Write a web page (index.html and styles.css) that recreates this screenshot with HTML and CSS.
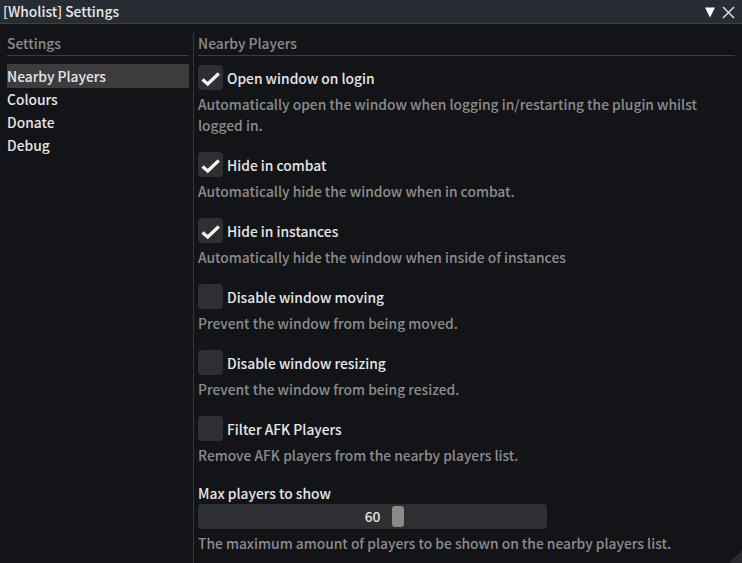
FILE: index.html
```html
<!DOCTYPE html>
<html>
<head>
<meta charset="utf-8">
<link rel="stylesheet" href="styles.css">
</head>
<body>
<div class="window">
  <div class="titlebar">
    <span class="title">[Wholist] Settings</span>
    <div class="title-buttons">
      <svg class="tri" width="11" height="11" viewBox="0 0 11 11"><polygon points="0,0.5 10,0.5 5,10.5" fill="#ffffff"/></svg>
      <svg class="close" width="13" height="13" viewBox="0 0 13 13"><path d="M1 1 L12 12 M12 1 L1 12" stroke="#e8e8e8" stroke-width="1.4" fill="none"/></svg>
    </div>
  </div>
  <div class="content">
    <div class="sidebar">
      <div class="header">Settings</div>
      <div class="sep"></div>
      <div class="nav">
        <div class="nav-item active">Nearby Players</div>
        <div class="nav-item">Colours</div>
        <div class="nav-item">Donate</div>
        <div class="nav-item">Debug</div>
      </div>
    </div>
    <div class="divider"></div>
    <div class="main">
      <div class="header">Nearby Players</div>
      <div class="sep"></div>
      <div class="options">
        <div class="option">
          <div class="check-row"><span class="box checked"><svg width="25" height="25" viewBox="0 0 25 25"><polyline points="4.5,14.5 9.7,19 20.8,8.5" fill="none" stroke="#f2f2f2" stroke-width="3.2"/></svg></span><span class="label">Open window on login</span></div>
          <div class="desc">Automatically open the window when logging in/restarting the plugin whilst logged in.</div>
        </div>
        <div class="option">
          <div class="check-row"><span class="box checked"><svg width="25" height="25" viewBox="0 0 25 25"><polyline points="4.5,14.5 9.7,19 20.8,8.5" fill="none" stroke="#f2f2f2" stroke-width="3.2"/></svg></span><span class="label">Hide in combat</span></div>
          <div class="desc">Automatically hide the window when in combat.</div>
        </div>
        <div class="option">
          <div class="check-row"><span class="box checked"><svg width="25" height="25" viewBox="0 0 25 25"><polyline points="4.5,14.5 9.7,19 20.8,8.5" fill="none" stroke="#f2f2f2" stroke-width="3.2"/></svg></span><span class="label">Hide in instances</span></div>
          <div class="desc">Automatically hide the window when inside of instances</div>
        </div>
        <div class="option">
          <div class="check-row"><span class="box"></span><span class="label">Disable window moving</span></div>
          <div class="desc">Prevent the window from being moved.</div>
        </div>
        <div class="option">
          <div class="check-row"><span class="box"></span><span class="label">Disable window resizing</span></div>
          <div class="desc">Prevent the window from being resized.</div>
        </div>
        <div class="option">
          <div class="check-row"><span class="box"></span><span class="label">Filter AFK Players</span></div>
          <div class="desc">Remove AFK players from the nearby players list.</div>
        </div>
        <div class="option slider-option">
          <div class="label plain">Max players to show</div>
          <div class="slider">
            <span class="slider-value">60</span>
            <span class="grab" style="left: 194px"></span>
          </div>
          <div class="desc">The maximum amount of players to be shown on the nearby players list.</div>
        </div>
      </div>
    </div>
  </div>
  <svg class="grip" width="13" height="13" viewBox="0 0 13 13"><polygon points="13,0 13,13 0,13" fill="#26282e"/></svg>
</div>
</body>
</html>
```

FILE: styles.css
```css
* { box-sizing: border-box; }
html, body { margin: 0; padding: 0; background: #131418; }
body {
  font-family: "Noto Sans CJK JP", "Noto Sans", sans-serif;
  font-weight: 500;
  font-size: 13.8px;
  color: #e6e6e6;
}
.window {
  position: relative;
  width: 742px;
  height: 563px;
  background: #131418;
  overflow: hidden;
}
.titlebar {
  height: 24px;
  background: #282c34;
  border-bottom: 1px solid #3b3f47;
  display: flex;
  align-items: center;
  justify-content: space-between;
  padding: 0 7px 0 3px;
}
.title {
  font-size: 13.8px;
  color: #e8e8e8;
  line-height: 23px;
}
.title-buttons {
  display: flex;
  align-items: center;
  gap: 6px;
  padding-top: 1px;
}
.content {
  display: flex;
  padding: 9px 7px 0 7px;
  height: 539px;
}
.sidebar {
  width: 182px;
  flex: none;
  padding-top: 0;
}
.divider {
  width: 1px;
  background: #33353b;
  margin: -1px 4px 0 4px;
  flex: none;
}
.main {
  flex: 1;
  padding-top: 0;
}
.header {
  color: #8c8c8c;
  line-height: 21px;
  height: 22px;
}
.sep {
  height: 1px;
  background: #3a3c42;
}
.nav {
  padding-top: 8px;
  display: flex;
  flex-direction: column;
}
.nav-item {
  height: 23px;
  line-height: 23px;
  color: #e6e6e6;
}
.nav-item.active {
  background: #3c3c3f;
  height: 24px;
  line-height: 25px;
}
.options {
  padding-top: 9px;
  display: flex;
  flex-direction: column;
  gap: 16px;
}
.option {
  display: flex;
  flex-direction: column;
}
.check-row {
  display: flex;
  align-items: center;
  height: 25px;
  gap: 4px;
}
.box {
  width: 25px;
  height: 25px;
  border-radius: 4px;
  background: #2e2f33;
  flex: none;
  display: block;
}
.box svg { display: block; }
.label { color: #e6e6e6; line-height: 21px; padding-top: 1px; }
.desc {
  color: #8c8c8c;
  line-height: 21px;
  margin-top: 4px;
}
.slider-option .label.plain { height: 21px; }
.slider {
  position: relative;
  width: 349px;
  height: 25px;
  margin-top: 1px;
  background: #2e2f33;
  border-radius: 4px;
  display: flex;
  align-items: center;
  justify-content: center;
  color: #e6e6e6;
}
.slider-value { line-height: 25px; }
.grab {
  position: absolute;
  top: 2px;
  width: 12px;
  height: 21px;
  background: #8a8a8a;
  border-radius: 3px;
}
.grip {
  position: absolute;
  right: 0;
  bottom: 0;
}
```
